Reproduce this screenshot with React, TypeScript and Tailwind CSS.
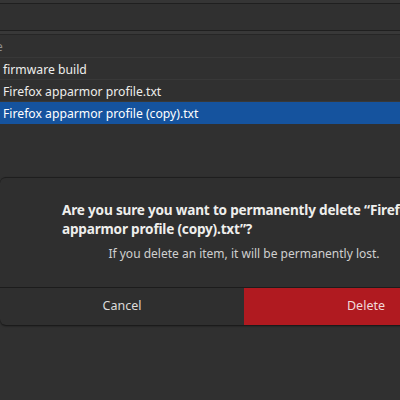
const rows = [
  { name: "firmware build", selected: false },
  { name: "Firefox apparmor profile.txt", selected: false },
  { name: "Firefox apparmor profile (copy).txt", selected: true },
];

export default function App() {
  return (
    <div
      className="relative w-[400px] h-[400px] overflow-hidden bg-[#303030] text-[#eeeeec]"
      style={{ fontFamily: '"Noto Sans", "Open Sans", sans-serif' }}
    >
      {/* window header and toolbar */}
      <div className="h-[4px] bg-[#353535] border-b border-[#1f1f1f]" />
      <div className="h-[27px] bg-[#303030] border-b border-[#1f1f1f]" />
      <div className="h-[4px] bg-[#383838] border-b border-[#262626]" />

      {/* file list */}
      <div className="-ml-[31px]">
        <div className="h-[23px] flex items-center border-b border-[#383838] text-[12px] text-[#8e8e8e] pt-[2px]">
          Name
        </div>
        {rows.map((row) => (
          <div
            key={row.name}
            className={
              row.selected
                ? "h-[22px] flex items-center bg-[#15539e] text-white text-[12.2px] pl-[34px] pt-[2px]"
                : "h-[22px] flex items-center border-b border-[#383838] text-[12.2px] pl-[34px] pt-[3px]"
            }
          >
            {row.name}
          </div>
        ))}
      </div>

      {/* confirmation dialog */}
      <div className="absolute left-0 top-[177px] w-[488px] rounded-md bg-[#2f2f2f] border-t border-[#1e1e1e] shadow-[0_1px_2px_rgba(0,0,0,0.6)] flex flex-col">
        <div className="h-[109px] flex flex-col items-center pt-[22px]">
          <div className="w-[364px] text-[13.6px] font-bold leading-[19px] tracking-[-0.2px]">
            Are you sure you want to permanently delete “Firefox apparmor profile (copy).txt”?
          </div>
          <div className="mt-[7px] text-[12px] leading-[18px] text-[#d0d0d0]">
            If you delete an item, it will be permanently lost.
          </div>
        </div>
        <div className="h-[38px] flex border-t border-[#1c1c1c]">
          <div className="flex-1 flex items-center justify-center text-[12.5px] text-[#dcdcdc]">
            Cancel
          </div>
          <div className="flex-1 flex items-center justify-center text-[12.5px] text-[#f0dada] bg-[#b01a20] rounded-br-md">
            Delete
          </div>
        </div>
      </div>
    </div>
  );
}
